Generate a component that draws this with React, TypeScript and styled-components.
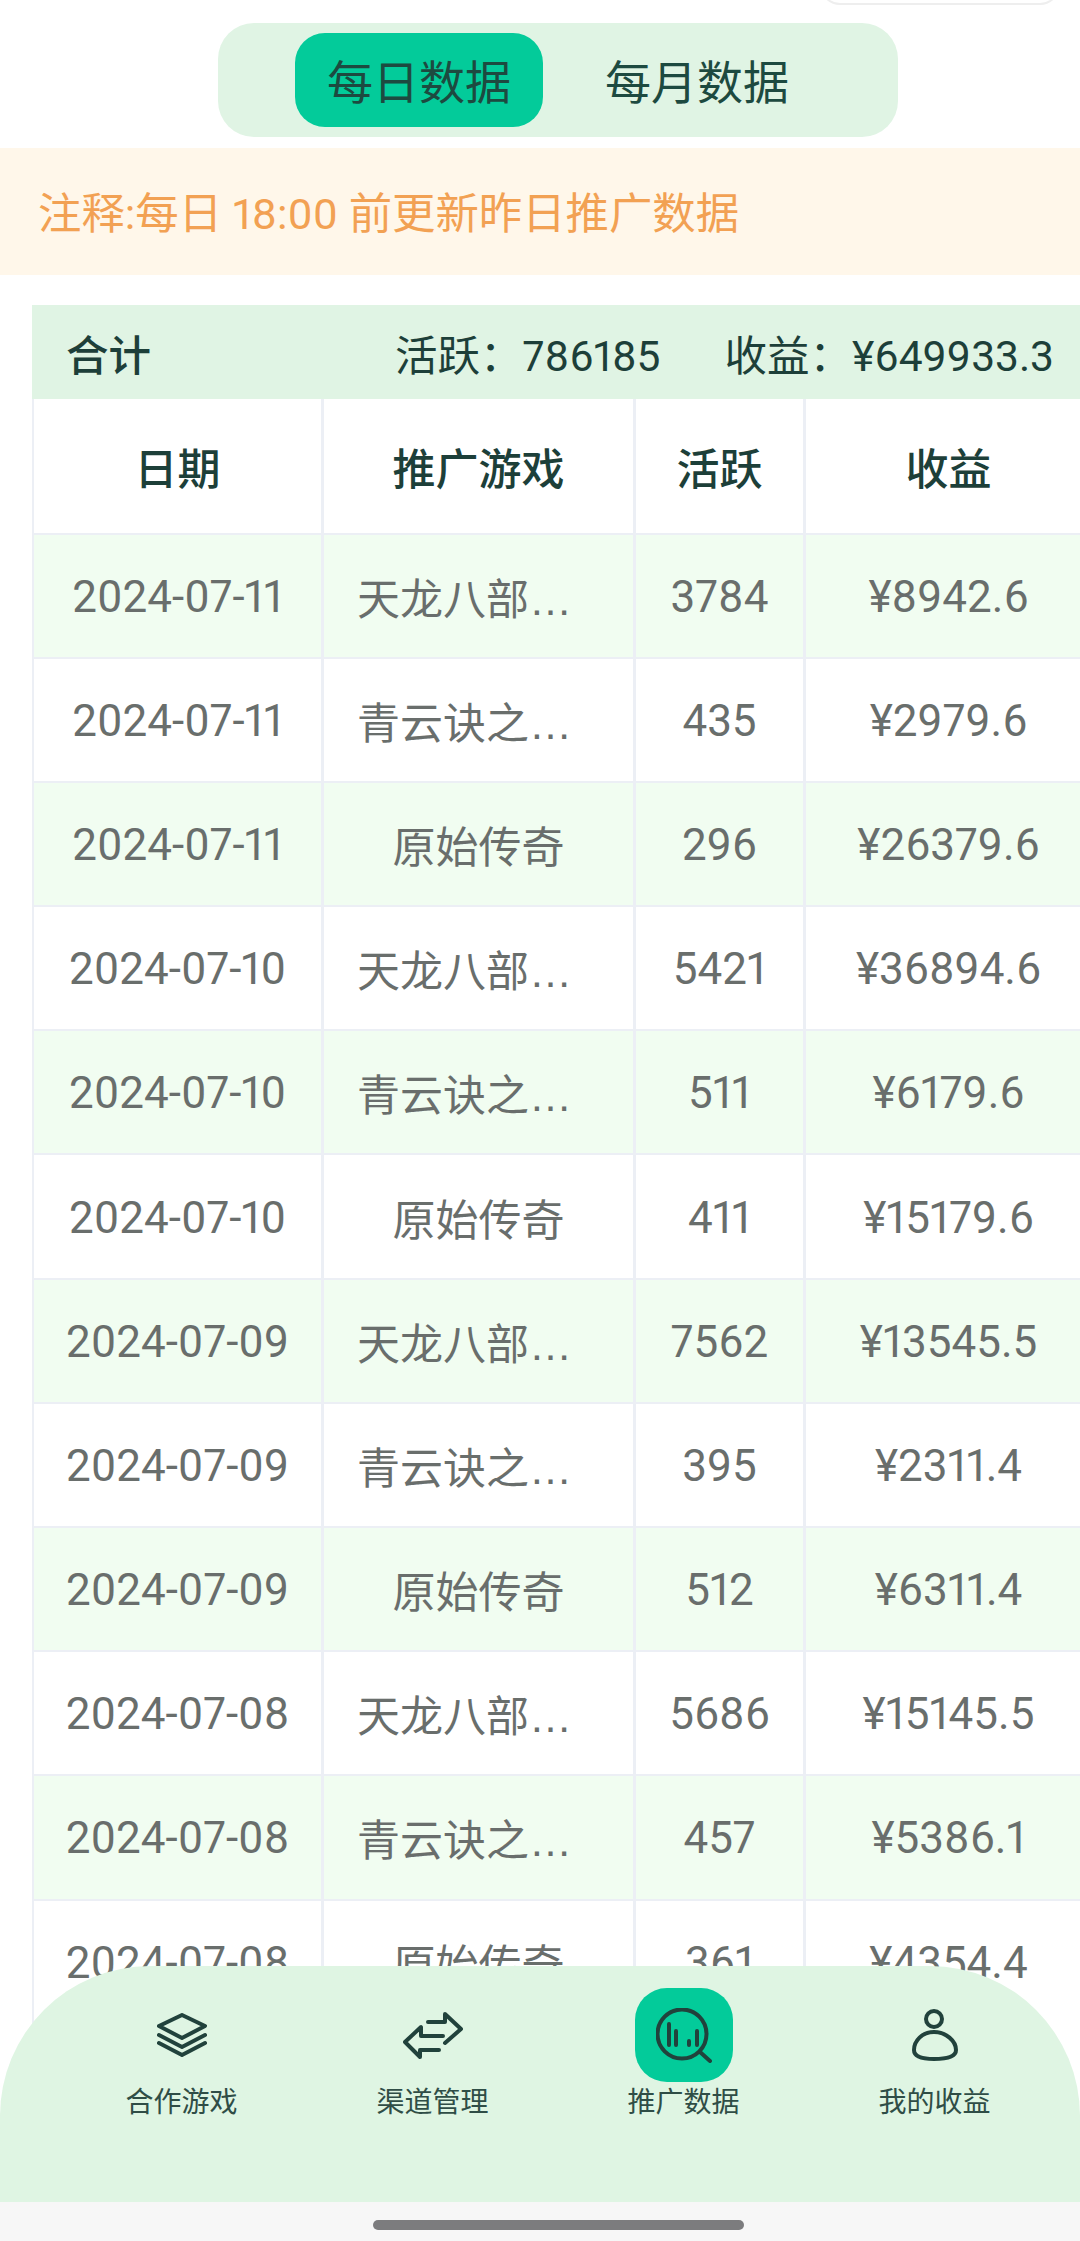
import React from "react";
import styled, { createGlobalStyle } from "styled-components";

const GlobalStyle = createGlobalStyle`
  html, body {
    margin: 0;
    padding: 0;
    background: #fff;
  }
  body {
    font-family: Roboto, "Noto Sans CJK SC", sans-serif;
    font-variant-numeric: proportional-nums;
  }
`;

const Page = styled.div`
  position: relative;
  width: 1080px;
  height: 2241px;
  padding-top: 23px;
  box-sizing: border-box;
  overflow: hidden;
  background: #fff;
`;

const StatusPill = styled.div`
  position: absolute;
  top: -40px;
  left: 820px;
  width: 240px;
  height: 45px;
  box-sizing: border-box;
  border: 2px solid #eeeeee;
  border-radius: 20px;
`;

const TabSwitch = styled.div`
  display: flex;
  justify-content: center;
  align-items: center;
  gap: 30px;
  width: 680px;
  height: 114px;
  margin: 0 0 11px 218px;
  background: #e0f4e4;
  border-radius: 36px;
`;

const Tab = styled.div<{ $active?: boolean }>`
  display: flex;
  align-items: center;
  justify-content: center;
  width: 248px;
  height: 94px;
  padding-bottom: 2px;
  box-sizing: border-box;
  border-radius: 30px;
  font-size: 46px;
  color: #1d4a40;
  background: ${(p) => (p.$active ? "#03cb9a" : "transparent")};
`;

const Note = styled.div`
  display: flex;
  align-items: center;
  height: 127px;
  padding: 0 0 3px 38px;
  box-sizing: border-box;
  margin-bottom: 30px;
  background: #fff7ea;
  color: #f2a153;
  font-size: 43.4px;
`;

const Table = styled.div`
  margin-left: 32px;
  width: 1060px;
`;

const Summary = styled.div`
  display: flex;
  align-items: center;
  height: 94px;
  padding: 0 38px 0 34px;
  box-sizing: border-box;
  background: #e0f4e4;
  color: #1d3f39;
  font-size: 42.5px;
`;

const SummaryTitle = styled.div`
  flex: 1;
  font-weight: 500;
`;

const SummaryItem = styled.div`
  margin-left: 64px;
`;

const Row = styled.div<{ $stripe?: boolean }>`
  display: grid;
  grid-template-columns: 290px 312px 170px 288px;
  height: 124.2px;
  box-sizing: border-box;
  border-left: 2px solid #eceff5;
  border-bottom: 2px solid #eceff5;
  background: ${(p) => (p.$stripe ? "#f1fdf1" : "#fff")};

  &:last-child {
    border-bottom-color: transparent;
  }
`;

const HeadRow = styled(Row)`
  height: 135.5px;
`;

const Cell = styled.div`
  display: flex;
  align-items: center;
  justify-content: center;
  padding-top: 2px;
  box-sizing: border-box;
  border-right: 3px solid #eceff5;
  font-size: 44px;
  color: #696e6c;
`;

const HeadCell = styled(Cell)`
  padding-top: 0;
  font-size: 43px;
  font-weight: 500;
  color: #1d3f39;
`;

// truncated names sit a little left of the column centre
const GameName = styled.span<{ $cut?: boolean }>`
  margin: -2px ${(p) => (p.$cut ? "28px" : "0")} 0 0;
  font-family: "Liberation Sans", "Noto Sans CJK SC", sans-serif;
  font-size: 43px;
`;

const BottomBar = styled.div`
  position: absolute;
  left: 0;
  right: 0;
  bottom: 0;
`;

const Nav = styled.div`
  display: grid;
  grid-template-columns: repeat(4, 251px);
  height: 236px;
  padding: 22px 0 0 56px;
  box-sizing: border-box;
  background: #dff5e3;
  border-radius: 150px 150px 0 0;
`;

const NavItem = styled.div`
  display: flex;
  flex-direction: column;
  align-items: center;
`;

const IconBox = styled.div<{ $active?: boolean }>`
  display: flex;
  align-items: center;
  justify-content: center;
  width: 98px;
  height: 94px;
  border-radius: 32px;
  background: ${(p) => (p.$active ? "#03cb9a" : "transparent")};
`;

const NavLabel = styled.div`
  margin-top: 5px;
  font-size: 28px;
  line-height: 32px;
  color: #2f4d46;
`;

const HomeStrip = styled.div`
  display: flex;
  justify-content: center;
  height: 39px;
  padding: 18px 0 0 37px;
  box-sizing: border-box;
  background: #f7f7f7;
`;

const HomeHandle = styled.div`
  width: 371px;
  height: 10px;
  border-radius: 5px;
  background: #7c7c7e;
`;

const Icon = styled.svg`
  fill: none;
  stroke: #21423c;
  stroke-width: 4;
  stroke-linecap: round;
  stroke-linejoin: round;
`;

const rows = [
  ["2024-07-11", "天龙八部…", "3784", "¥8942.6"],
  ["2024-07-11", "青云诀之…", "435", "¥2979.6"],
  ["2024-07-11", "原始传奇", "296", "¥26379.6"],
  ["2024-07-10", "天龙八部…", "5421", "¥36894.6"],
  ["2024-07-10", "青云诀之…", "511", "¥6179.6"],
  ["2024-07-10", "原始传奇", "411", "¥15179.6"],
  ["2024-07-09", "天龙八部…", "7562", "¥13545.5"],
  ["2024-07-09", "青云诀之…", "395", "¥2311.4"],
  ["2024-07-09", "原始传奇", "512", "¥6311.4"],
  ["2024-07-08", "天龙八部…", "5686", "¥15145.5"],
  ["2024-07-08", "青云诀之…", "457", "¥5386.1"],
  ["2024-07-08", "原始传奇", "361", "¥4354.4"],
];

const LayersIcon = () => (
  <Icon width="50" height="44" viewBox="0 0 50 44">
    <path d="M25 2 L48 13 L25 25 L2 13 Z" />
    <path d="M2 22 L25 34 L48 22" />
    <path d="M2 30 L25 42 L48 30" />
  </Icon>
);

const SwapIcon = () => (
  <Icon width="60" height="47" viewBox="0 0 60 47">
    <path d="M25 10 H42 V2 L58 17 L42 31" />
    <path d="M36 38 H17 V45 L2 30 L18 15 V24 H40" />
  </Icon>
);

const SearchChartIcon = () => (
  <Icon width="56" height="55" viewBox="0 0 56 55">
    <circle cx="26" cy="26" r="24.5" />
    <path d="M44 44 L54 53" />
    <path d="M13 16 V37 M20 23 V37 M33 33 V37 M41 23 V37" />
  </Icon>
);

const PersonIcon = () => (
  <Icon width="46" height="52" viewBox="0 0 46 52">
    <circle cx="22" cy="10" r="8" />
    <path d="M22 23 C10 23 2 32 2 41 C2 48 10 50 22 50 C34 50 44 48 44 41 C44 32 34 23 22 23 Z" />
  </Icon>
);

const navItems = [
  { label: "合作游戏", icon: <LayersIcon /> },
  { label: "渠道管理", icon: <SwapIcon /> },
  { label: "推广数据", icon: <SearchChartIcon />, active: true },
  { label: "我的收益", icon: <PersonIcon /> },
];

const App = () => {
  return (
    <Page>
      <GlobalStyle />
      <StatusPill />
      <TabSwitch>
        <Tab $active>每日数据</Tab>
        <Tab>每月数据</Tab>
      </TabSwitch>
      <Note>注释:每日 18:00 前更新昨日推广数据</Note>
      <Table>
        <Summary>
          <SummaryTitle>合计</SummaryTitle>
          <SummaryItem>活跃：786185</SummaryItem>
          <SummaryItem>收益：¥649933.3</SummaryItem>
        </Summary>
        <HeadRow>
          <HeadCell>日期</HeadCell>
          <HeadCell>推广游戏</HeadCell>
          <HeadCell>活跃</HeadCell>
          <HeadCell>收益</HeadCell>
        </HeadRow>
        {rows.map((row, i) => (
          <Row key={i} $stripe={i % 2 === 0}>
            <Cell>{row[0]}</Cell>
            <Cell><GameName $cut={row[1].endsWith("…")}>{row[1]}</GameName></Cell>
            <Cell>{row[2]}</Cell>
            <Cell>{row[3]}</Cell>
          </Row>
        ))}
      </Table>
      <BottomBar>
        <Nav>
          {navItems.map((item) => (
            <NavItem key={item.label}>
              <IconBox $active={item.active}>{item.icon}</IconBox>
              <NavLabel>{item.label}</NavLabel>
            </NavItem>
          ))}
        </Nav>
        <HomeStrip>
          <HomeHandle />
        </HomeStrip>
      </BottomBar>
    </Page>
  );
};

export default App;
